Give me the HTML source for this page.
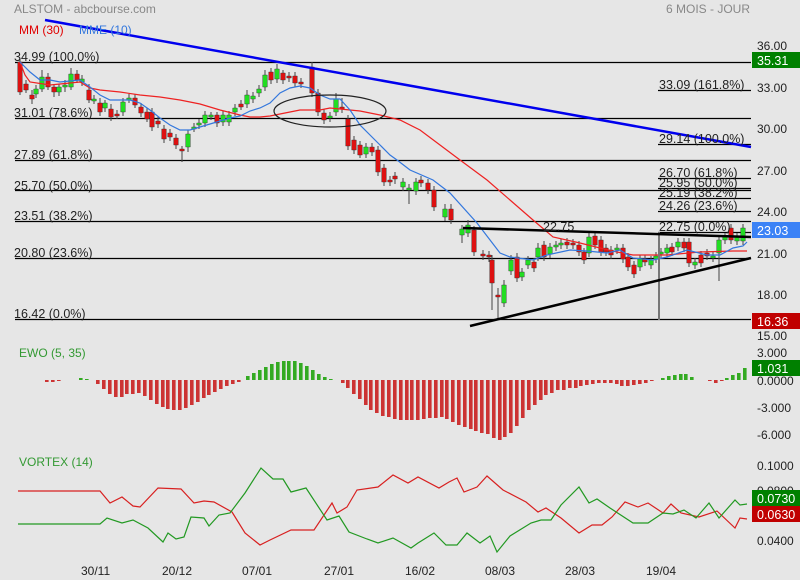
<!DOCTYPE html>
<html><head><meta charset="utf-8"><style>
body{margin:0;background:#e6e6e6;}
svg{display:block;font-family:"Liberation Sans",sans-serif;}
</style></head><body>
<svg width="800" height="580" xmlns="http://www.w3.org/2000/svg">
<rect width="800" height="580" fill="#e6e6e6"/>
<g stroke="#000" stroke-width="1.2">
<line x1="15" y1="62.5" x2="751" y2="62.5"/>
<line x1="15" y1="118.5" x2="751" y2="118.5"/>
<line x1="15" y1="160.5" x2="751" y2="160.5"/>
<line x1="15" y1="190.5" x2="751" y2="190.5"/>
<line x1="15" y1="221.5" x2="751" y2="221.5"/>
<line x1="15" y1="258.5" x2="751" y2="258.5"/>
<line x1="15" y1="319.5" x2="751" y2="319.5"/>
<line x1="658" y1="90.5" x2="751" y2="90.5"/>
<line x1="658" y1="144.5" x2="751" y2="144.5"/>
<line x1="658" y1="178.5" x2="751" y2="178.5"/>
<line x1="658" y1="188.5" x2="751" y2="188.5"/>
<line x1="658" y1="198.5" x2="751" y2="198.5"/>
<line x1="658" y1="211.5" x2="751" y2="211.5"/>
<line x1="658" y1="232.5" x2="751" y2="232.5"/>
</g>
<path fill="none" stroke="#444" stroke-width="1" d="M20,58V95M26,80V93M32,90V104M36,85V98M42,70V92M48,73V90M54,84V97M59,84V96M65,80V92M71,68V90M77,70V83M82,75V86M89,84V103M94,95V104M100,98V116M105,100V112M111,104V121M117,110V119M123,98V116M129,94V103M135,94V108M141,103V117M147,108V122M152,108V131M158,117V128M164,125V143M170,129V141M176,134V149M182,146V162M188,130V152M194,123V132M199,119V129M205,111V127M211,112V120M217,112V127M223,111V126M229,111V126M235,104V116M241,100V110M247,90V108M253,92V103M259,85V97M265,70V91M271,68V84M277,64V83M283,70V84M289,72V82M295,72V87M301,78V88M312,62V97M318,89V116M324,109V124M330,112V122M336,93V116M342,98V113M348,115V150M354,136V154M360,141V158M366,143V158M372,143V156M378,146V176M384,164V186M390,176V186M395,172V184M403,178V191M409,184V204M416,178V195M421,176V187M428,179V194M434,186V211M445,204V221M451,204V224M462,225V243M468,220V237M474,226V256M483,250V260M489,251V262M492,255V310M498,288V320M504,280V307M511,255V275M517,253V282M522,268V281M528,256V269M534,258V272M538,243V261M544,241V261M550,243V258M556,241V251M561,239V249M567,238V249M573,239V249M579,241V256M584,248V264M589,233V257M595,232V249M601,236V256M606,244V256M611,246V259M617,244V254M623,244V263M628,253V271M634,261V278M640,255V271M645,255V266M651,256V269M656,252V263M661,248V258M667,244V257M672,243V256M678,238V251M684,238V252M689,238V267M695,258V269M701,251V267M707,249V260M713,252V262M719,236V281M725,233V244M731,224V244M737,233V245M743,224V245"/>
<path fill="#22dd22" stroke="#333" stroke-width="0.4" d="M33.7,89h4.6v5h-4.6zM39.7,77h4.6v12h-4.6zM56.7,87h4.6v5h-4.6zM62.7,85h4.6v2h-4.6zM68.7,74h4.6v13h-4.6zM79.7,79h4.6v3h-4.6zM91.7,99h4.6v2h-4.6zM102.7,103h4.6v5h-4.6zM120.7,102h4.6v10h-4.6zM126.7,98h4.6v2h-4.6zM185.7,134h4.6v13h-4.6zM191.7,127h4.6v2h-4.6zM196.7,123h4.6v2h-4.6zM202.7,115h4.6v8h-4.6zM208.7,115h4.6v2h-4.6zM220.7,115h4.6v7h-4.6zM226.7,115h4.6v7h-4.6zM232.7,108h4.6v4h-4.6zM244.7,95h4.6v9h-4.6zM250.7,96h4.6v3h-4.6zM256.7,89h4.6v4h-4.6zM262.7,75h4.6v12h-4.6zM274.7,69h4.6v10h-4.6zM327.7,116h4.6v2h-4.6zM333.7,99h4.6v13h-4.6zM363.7,147h4.6v7h-4.6zM400.7,182h4.6v5h-4.6zM406.7,188h4.6v2h-4.6zM413.7,182h4.6v9h-4.6zM442.7,209h4.6v8h-4.6zM459.7,229h4.6v6h-4.6zM465.7,225h4.6v8h-4.6zM501.7,285h4.6v18h-4.6zM508.7,260h4.6v11h-4.6zM519.7,272h4.6v5h-4.6zM525.7,260h4.6v5h-4.6zM535.7,248h4.6v9h-4.6zM547.7,247h4.6v7h-4.6zM553.7,245h4.6v2h-4.6zM558.7,243h4.6v2h-4.6zM586.7,237h4.6v16h-4.6zM614.7,248h4.6v2h-4.6zM637.7,259h4.6v8h-4.6zM648.7,260h4.6v5h-4.6zM653.7,256h4.6v3h-4.6zM658.7,252h4.6v2h-4.6zM664.7,248h4.6v5h-4.6zM675.7,242h4.6v5h-4.6zM692.7,262h4.6v3h-4.6zM710.7,256h4.6v2h-4.6zM716.7,240h4.6v13h-4.6zM722.7,237h4.6v3h-4.6zM734.7,237h4.6v4h-4.6zM740.7,228h4.6v13h-4.6z"/>
<path fill="#dd1111" stroke="#333" stroke-width="0.4" d="M17.7,62h4.6v30h-4.6zM23.7,84h4.6v6h-4.6zM29.7,95h4.6v4h-4.6zM45.7,77h4.6v10h-4.6zM51.7,87h4.6v5h-4.6zM74.7,74h4.6v6h-4.6zM86.7,90h4.6v10h-4.6zM97.7,103h4.6v9h-4.6zM108.7,109h4.6v8h-4.6zM114.7,114h4.6v2h-4.6zM132.7,98h4.6v7h-4.6zM138.7,107h4.6v6h-4.6zM144.7,112h4.6v7h-4.6zM149.7,112h4.6v15h-4.6zM155.7,121h4.6v3h-4.6zM161.7,129h4.6v10h-4.6zM167.7,133h4.6v4h-4.6zM173.7,138h4.6v7h-4.6zM179.7,149h4.6v2h-4.6zM214.7,115h4.6v8h-4.6zM238.7,104h4.6v3h-4.6zM268.7,72h4.6v8h-4.6zM280.7,73h4.6v7h-4.6zM286.7,76h4.6v2h-4.6zM292.7,76h4.6v7h-4.6zM298.7,82h4.6v2h-4.6zM309.7,67h4.6v26h-4.6zM315.7,93h4.6v19h-4.6zM321.7,113h4.6v7h-4.6zM339.7,107h4.6v2h-4.6zM345.7,119h4.6v27h-4.6zM351.7,140h4.6v10h-4.6zM357.7,145h4.6v10h-4.6zM369.7,147h4.6v5h-4.6zM375.7,150h4.6v22h-4.6zM381.7,168h4.6v14h-4.6zM387.7,180h4.6v2h-4.6zM392.7,176h4.6v3h-4.6zM418.7,180h4.6v3h-4.6zM425.7,183h4.6v7h-4.6zM431.7,190h4.6v17h-4.6zM448.7,209h4.6v11h-4.6zM471.7,230h4.6v22h-4.6zM480.7,254h4.6v2h-4.6zM486.7,255h4.6v2h-4.6zM489.7,260h4.6v23h-4.6zM495.7,295h4.6v2h-4.6zM514.7,257h4.6v21h-4.6zM531.7,262h4.6v6h-4.6zM541.7,245h4.6v12h-4.6zM564.7,242h4.6v3h-4.6zM570.7,243h4.6v2h-4.6zM576.7,245h4.6v7h-4.6zM581.7,252h4.6v8h-4.6zM592.7,236h4.6v9h-4.6zM598.7,240h4.6v12h-4.6zM603.7,248h4.6v4h-4.6zM608.7,250h4.6v5h-4.6zM620.7,248h4.6v11h-4.6zM625.7,257h4.6v10h-4.6zM631.7,265h4.6v9h-4.6zM642.7,259h4.6v3h-4.6zM669.7,247h4.6v5h-4.6zM681.7,242h4.6v6h-4.6zM686.7,242h4.6v21h-4.6zM698.7,255h4.6v8h-4.6zM704.7,253h4.6v3h-4.6zM728.7,228h4.6v12h-4.6z"/>
<polyline fill="none" stroke="#ee2222" stroke-width="1.2" points="20,62 25,75 30,82 50,85 70,83 80,82 90,88 100,90 120,92 140,95 160,97 180,100 200,104 220,110 240,115 250,117 260,117 270,116 280,114 290,112 300,110 320,110 330,108 340,109 350,110 360,111 370,113 380,115 400,120 420,130 440,145 460,160 487,180 510,200 533,220 553,237 580,243 600,248 617,252 633,255 667,255 700,252 733,251 747,251"/>
<polyline fill="none" stroke="#3377dd" stroke-width="1.2" points="20,62 30,72 40,80 50,80 60,82 70,81 80,80 90,87 100,95 110,100 130,100 140,103 150,110 160,118 170,125 180,130 190,130 200,127 210,124 220,121 230,118 240,116 250,111 260,108 270,103 280,93 290,88 300,86 310,88 320,95 330,99 340,99 350,110 360,125 370,135 380,145 390,155 397,160 410,170 433,180 450,193 477,223 500,253 510,257 533,260 547,255 570,250 587,251 607,253 620,250 633,258 653,260 667,257 687,250 707,255 720,255 733,248 743,246 747,242"/>
<line x1="659" y1="232" x2="659" y2="320" stroke="#777" stroke-width="2"/>
<line x1="45" y1="20" x2="751" y2="147" stroke="#0000ee" stroke-width="2.5"/>
<line x1="470" y1="326" x2="751" y2="258" stroke="#000" stroke-width="2.5"/>
<line x1="463" y1="228" x2="751" y2="237" stroke="#000" stroke-width="2.5"/>
<ellipse cx="330" cy="111" rx="56" ry="16" fill="none" stroke="#222" stroke-width="1.2"/>
<g font-size="12.5" fill="#222">
<text x="14" y="61">34.99  (100.0%)</text>
<text x="14" y="117">31.01  (78.6%)</text>
<text x="14" y="159">27.89  (61.8%)</text>
<text x="14" y="190">25.70  (50.0%)</text>
<text x="14" y="220">23.51  (38.2%)</text>
<text x="14" y="257">20.80  (23.6%)</text>
<text x="14" y="318">16.42  (0.0%)</text>
<text x="659" y="89">33.09  (161.8%)</text>
<text x="659" y="143">29.14  (100.0%)</text>
<text x="659" y="177">26.70  (61.8%)</text>
<text x="659" y="187">25.95  (50.0%)</text>
<text x="659" y="197">25.19  (38.2%)</text>
<text x="659" y="210">24.26  (23.6%)</text>
<text x="659" y="231">22.75  (0.0%)</text>
<text x="543" y="231">22.75</text>
</g>
<g font-size="12" fill="#222">
<text x="757" y="50">36.00</text>
<text x="757" y="92">33.00</text>
<text x="757" y="133">30.00</text>
<text x="757" y="175">27.00</text>
<text x="757" y="216">24.00</text>
<text x="757" y="258">21.00</text>
<text x="757" y="299">18.00</text>
<text x="757" y="340">15.00</text>
<text x="757" y="357">3.000</text>
<text x="757" y="385">0.0000</text>
<text x="757" y="412">-3.000</text>
<text x="757" y="439">-6.000</text>
<text x="757" y="470">0.1000</text>
<text x="757" y="495">0.0800</text>
<text x="757" y="545">0.0400</text>
</g>
<rect x="752" y="52" width="48" height="16" fill="#008000"/><text x="757" y="65" font-size="12.5" fill="#fff">35.31</text>
<rect x="752" y="222" width="48" height="16" fill="#3b82f6"/><text x="757" y="235" font-size="12.5" fill="#fff">23.03</text>
<rect x="752" y="313" width="48" height="16" fill="#c00000"/><text x="757" y="326" font-size="12.5" fill="#fff">16.36</text>
<rect x="752" y="360" width="48" height="16" fill="#008000"/><text x="757" y="373" font-size="12.5" fill="#fff">1.031</text>
<rect x="752" y="490" width="48" height="16" fill="#008000"/><text x="757" y="503" font-size="12.5" fill="#fff">0.0730</text>
<rect x="752" y="506" width="48" height="16" fill="#c00000"/><text x="757" y="519" font-size="12.5" fill="#fff">0.0630</text>
<text x="14" y="13" font-size="12" fill="#888">ALSTOM - abcbourse.com</text>
<text x="666" y="13" font-size="12" fill="#888">6 MOIS - JOUR</text>
<text x="19" y="34" font-size="12" fill="#e00000">MM (30)</text>
<text x="79" y="34" font-size="12" fill="#3377dd">MME (10)</text>
<text x="19" y="357" font-size="12" fill="#339933">EWO (5, 35)</text>
<text x="19" y="466" font-size="12" fill="#339933">VORTEX (14)</text>
<path fill="#cc3333" d="M45,380h3.6v2h-3.6zM51,380h3.6v2h-3.6zM57,380h3.6v1h-3.6zM96,380h3.6v4h-3.6zM102,380h3.6v9h-3.6zM108,380h3.6v14h-3.6zM114,380h3.6v17h-3.6zM120,380h3.6v17h-3.6zM125,380h3.6v14h-3.6zM131,380h3.6v14h-3.6zM137,380h3.6v13h-3.6zM143,380h3.6v16h-3.6zM149,380h3.6v20h-3.6zM155,380h3.6v24h-3.6zM161,380h3.6v27h-3.6zM166,380h3.6v29h-3.6zM172,380h3.6v30h-3.6zM178,380h3.6v30h-3.6zM184,380h3.6v28h-3.6zM190,380h3.6v25h-3.6zM196,380h3.6v22h-3.6zM202,380h3.6v18h-3.6zM207,380h3.6v15h-3.6zM213,380h3.6v12h-3.6zM219,380h3.6v9h-3.6zM225,380h3.6v6h-3.6zM231,380h3.6v4h-3.6zM237,380h3.6v2h-3.6zM341,380h3.6v3h-3.6zM346,380h3.6v8h-3.6zM352,380h3.6v14h-3.6zM358,380h3.6v19h-3.6zM364,380h3.6v25h-3.6zM369,380h3.6v30h-3.6zM375,380h3.6v33h-3.6zM381,380h3.6v36h-3.6zM387,380h3.6v37h-3.6zM393,380h3.6v39h-3.6zM399,380h3.6v40h-3.6zM405,380h3.6v40h-3.6zM410,380h3.6v40h-3.6zM416,380h3.6v40h-3.6zM422,380h3.6v39h-3.6zM428,380h3.6v38h-3.6zM434,380h3.6v38h-3.6zM440,380h3.6v37h-3.6zM445,380h3.6v39h-3.6zM451,380h3.6v42h-3.6zM457,380h3.6v45h-3.6zM463,380h3.6v47h-3.6zM469,380h3.6v49h-3.6zM474,380h3.6v51h-3.6zM480,380h3.6v53h-3.6zM486,380h3.6v54h-3.6zM492,380h3.6v58h-3.6zM498,380h3.6v60h-3.6zM503,380h3.6v57h-3.6zM509,380h3.6v53h-3.6zM515,380h3.6v46h-3.6zM521,380h3.6v38h-3.6zM527,380h3.6v30h-3.6zM533,380h3.6v25h-3.6zM539,380h3.6v20h-3.6zM544,380h3.6v15h-3.6zM550,380h3.6v13h-3.6zM556,380h3.6v10h-3.6zM562,380h3.6v10h-3.6zM568,380h3.6v8h-3.6zM574,380h3.6v8h-3.6zM579,380h3.6v6h-3.6zM585,380h3.6v5h-3.6zM591,380h3.6v4h-3.6zM597,380h3.6v3h-3.6zM603,380h3.6v3h-3.6zM609,380h3.6v3h-3.6zM615,380h3.6v4h-3.6zM620,380h3.6v6h-3.6zM626,380h3.6v6h-3.6zM632,380h3.6v5h-3.6zM638,380h3.6v4h-3.6zM644,380h3.6v3h-3.6zM650,380h3.6v1h-3.6zM708,380h3.6v1h-3.6zM714,380h3.6v3h-3.6zM720,380h3.6v1h-3.6z"/>
<path fill="#33aa22" d="M79,378h3.6v2h-3.6zM85,379h3.6v1h-3.6zM246,376h3.6v4h-3.6zM252,373h3.6v7h-3.6zM258,370h3.6v10h-3.6zM264,367h3.6v13h-3.6zM270,364h3.6v16h-3.6zM276,362h3.6v18h-3.6zM282,361h3.6v19h-3.6zM287,361h3.6v19h-3.6zM293,361h3.6v19h-3.6zM299,363h3.6v17h-3.6zM305,366h3.6v14h-3.6zM311,370h3.6v10h-3.6zM317,374h3.6v6h-3.6zM323,377h3.6v3h-3.6zM329,379h3.6v1h-3.6zM661,378h3.6v2h-3.6zM667,376h3.6v4h-3.6zM673,375h3.6v5h-3.6zM679,374h3.6v6h-3.6zM684,374h3.6v6h-3.6zM690,377h3.6v3h-3.6zM725,378h3.6v2h-3.6zM731,375h3.6v5h-3.6zM737,373h3.6v7h-3.6zM743,368h3.6v12h-3.6z"/>
<polyline fill="none" stroke="#d82020" stroke-width="1.2" points="18,491 100,491 110,503 122,497 133,506 140,507 158,488 181,489 194,503 204,501 214,502 232,512 245,533 260,545 270,540 291,530 314,530 332,503 337,513 347,507 357,490 378,487 393,475 408,483 418,477 439,488 449,482 457,478 464,492 477,487 487,476 503,490 526,502 538,512 546,508 561,518 579,533 592,525 602,525 612,517 625,502 638,507 648,503 663,513 671,504 681,513 699,517 717,511 735,528 740,518 747,519"/>
<polyline fill="none" stroke="#229922" stroke-width="1.2" points="18,524 100,524 107,518 122,523 133,520 148,528 163,542 168,533 176,539 184,537 191,517 204,518 209,526 219,515 230,513 245,493 261,468 273,479 283,479 291,492 306,488 327,520 339,516 349,532 367,539 378,543 393,538 411,548 418,543 434,533 446,545 457,545 467,533 480,543 490,536 497,552 510,536 531,523 541,520 551,520 561,505 579,487 589,503 597,499 610,508 633,523 648,523 663,513 673,514 684,510 696,518 709,503 719,518 735,500 740,505 747,504"/>
<g font-size="12" fill="#222">
<text x="81" y="575">30/11</text><text x="162" y="575">20/12</text><text x="242" y="575">07/01</text>
<text x="324" y="575">27/01</text><text x="405" y="575">16/02</text><text x="485" y="575">08/03</text>
<text x="565" y="575">28/03</text><text x="646" y="575">19/04</text>
</g>
</svg>
</body></html>
